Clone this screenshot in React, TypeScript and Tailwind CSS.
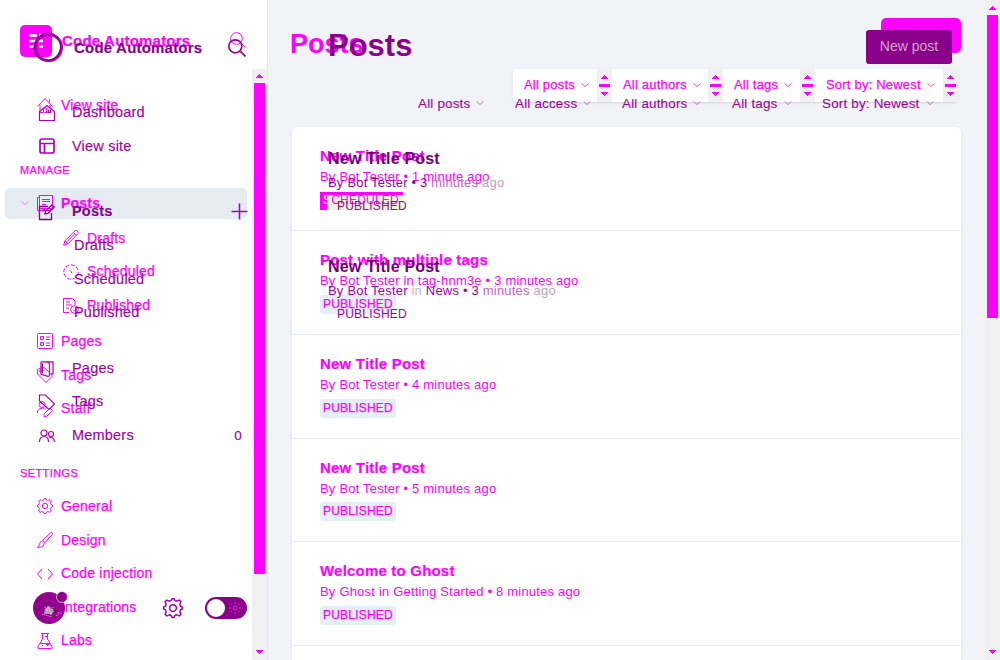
import type { ReactNode } from "react";
import clsx from "clsx";

type IconName =
  | "home" | "house" | "layout" | "posts" | "compose" | "pen" | "clock" | "published" | "pages" | "book"
  | "tag" | "tagSide" | "staff" | "members" | "gear" | "brush" | "code" | "labs" | "search" | "plus" | "down";

const shapes: Record<IconName, ReactNode> = {
  home: <path d="M.5 8.5 8 .5l7.500 8M3 6.500v8h3.500V10h3v4.500H13V6.500M12.500 4.500V1.500" />,
  house: <path d="M.5 6.500 8 .5l7.500 6v9H.5ZM5.500 7.500h2M9.500 5v2.500h2V5" />,
  layout: <><rect x="1" y="1" width="14" height="14" rx="2" /><path d="M1 5.500h14M5.500 5.500V15" /></>,
  posts: <><rect x="2.500" y=".5" width="13" height="13" /><path d="M2.500 2.500h-2v13h13v-2M5 4.500h8M5 6.500h8M5 9.500h4" /></>,
  compose: <path d="M9 2.500H.5v13h12V9M6 10l.7-3L13 .8 15.300 3 9 9.300ZM4 6h2" />,
  pen: <path d="m.7 15.300 1.300-4.600L12 .8q1.300-.8 2.500.4 1.200 1.300.4 2.500L5 13.800ZM2 10.700 5 13.800M10.500 2.500l3 3M3.500 12 12 3.500" />,
  clock: <><circle cx="8" cy="8" r="7.200" strokeDasharray="4 1.600" /><path d="M7 6.500l1.500 1.500v1" /></>,
  published: <><path d="M6 14.500H.5V.5h9L12 3v4M3 4h4M3 7h6M3 10h3" /><circle cx="11.500" cy="11.500" r="3.800" /><path d="m10 11.500 1.500 1.500 2-2.500" /></>,
  pages: <><rect x=".5" y=".5" width="15" height="15" rx="1" /><path d="M3.500 3.500h3v3h-3ZM3.500 9.500h3v3h-3ZM9 4h4M9 6.500h4M9 10h4M9 12.500h4" /></>,
  book: <path d="M2 .8h12v12h-2M2 .8v12.400l7 2.200q1.500 0 1.500-1.400V4Q10.500 1 7 1M3.500 2.500v10" />,
  tag: <><path d="M.5 6V2.500L5 .5l3 .5 7.500 8-6.500 6.500L.5 7Z" /><circle cx="3.500" cy="4" r="1" /></>,
  tagSide: <path d="M.5 1h6l9 9-5.500 5.500L.5 7Z" />,
  staff: <><circle cx="5" cy="3.500" r="3" /><path d="M.5 12V10q1.500-3 5-3 2.500 0 3 1M7 13l6-6 2.500 2.500-6 6H7Z" /></>,
  members: <><circle cx="5" cy="5" r="3" /><circle cx="12" cy="6" r="2.500" /><path d="M.5 14q0-5.500 4.500-5.500T9.500 14M10 10q5-2 5.500 4" /></>,
  gear: <><circle cx="8" cy="8" r="2.700" /><path d="M6.500 2 7.200.5h1.600L9.500 2q1 .8 2 .3l1.500-.6L14.300 3l-.6 1.500q-.5 1 .3 2l1.500.7v1.600l-1.500.7q-.8 1-.3 2l.6 1.500-1.300 1.300-1.500-.6q-1-.5-2 .3l-.7 1.500H7.200L6.500 14q-1-.8-2-.3l-1.500.6L1.700 13l.6-1.500q.5-1-.3-2L.5 8.800V7.200L2 6.500q.8-1 .3-2L1.700 3 3 1.700l1.500.6q1 .5 2-.3Z" /></>,
  brush: <path d="M5.500 8.500 13.500.8q1.200-.7 1.800.3.500.7-.3 1.700l-7.500 8M5.500 8.500l2 2.200M5.500 8.800q-2.500.3-3 3-.2 2.200-2 3.500 7 .4 6.500-4.500" />,
  code: <path d="m5 3-4.500 5L5 13M11 3l4.500 5-4.500 5" />,
  labs: <path d="M4 .5h8M5.500 1v5L.8 14q-.3 1.500 1 1.500h12.400q1.300 0 1-1.500L10.500 6V1M3 10.500h10M8 3.500h2.500M5 12.500h1M9 11.500h3M10.500 10v3" />,
  search: <><circle cx="6.500" cy="6.500" r="5.800" /><path d="m10.800 10.800 4.700 4.700" /></>,
  plus: <path d="M8 .5v15M.5 8h15" />,
  down: <path d="m1 5 7 6 7-6" />,
};

function Icon({ name, className, weight = 1 }: { name: IconName; className?: string; weight?: number }) {
  return (
    <svg viewBox="0 0 16 16" fill="none" stroke="currentColor" strokeWidth={weight} className={clsx("shrink-0 overflow-visible", className)}>
      {shapes[name]}
    </svg>
  );
}

function Arrow({ flip }: { flip?: boolean }) {
  return (
    <svg viewBox="0 0 7 4" className="h-1 w-[7px] shrink-0 fill-[#ff00ff]" shapeRendering="crispEdges">
      {flip ? <path d="M0 0h7v1H0ZM1 1h5v1H1ZM2 2h3v1H2ZM3 3h1v1H3Z" /> : <path d="M3 0h1v1H3ZM2 1h3v1H2ZM1 2h5v1H1ZM0 3h7v1H0Z" />}
    </svg>
  );
}

function Scrollbar({ thumb, className }: { thumb: string; className?: string }) {
  return (
    <div className={clsx("flex w-[15px] shrink-0 flex-col items-center justify-between bg-[#f0f0f0] py-1.5", className)}>
      <div className="flex flex-col items-center gap-[5px]">
        <Arrow />
        <div className={clsx("w-[11px] bg-[#ff00ff]", thumb)} />
      </div>
      <Arrow flip />
    </div>
  );
}

function OldItem({ icon, label, className }: { icon: IconName; label: string; className?: string }) {
  return (
    <div className={clsx("flex h-[33.6px] shrink-0 items-center gap-2", className ?? "pl-[37px]")}>
      <Icon name={icon} className="size-4" />
      {label}
    </div>
  );
}

function OldSidebar() {
  return (
    <aside className="flex w-[268px] shrink-0 flex-col border-r border-[#e3e7ef] bg-white text-[14px] tracking-[.2px] [-webkit-text-stroke:.25px]">
      <header className="flex h-[69px] shrink-0 items-center pb-[13px] pl-5 pt-[27px]">
        <svg viewBox="0 0 32 32" className="-mt-0.5 size-8">
          <rect width="32" height="32" rx="5" fill="#ff00ff" />
          <path d="M9 10.500h8M19 10.500h4M9 16h14M9 21.500h8M19 21.500h4" stroke="white" strokeWidth="2.500" />
        </svg>
        <b className="ml-2.5 text-[15px]">Code Automators</b>
        <Icon name="search" className="-mt-1 ml-[40px] size-4" />
      </header>
      <div className="flex min-h-0 flex-1">
        <nav className="flex min-w-0 flex-1 flex-col pt-[20px]">
          <OldItem icon="home" label="View site" />
          <div className="mb-[5px] mt-9 flex h-6 shrink-0 items-center pl-5 text-[11px] tracking-[.4px]">MANAGE</div>
          <div className="ml-[5px] mr-[5px] flex h-[31px] shrink-0 items-center rounded-[5px] bg-[#e6ebf2] pl-4 font-bold">
            <Icon name="down" className="mr-2 size-2" />
            <Icon name="posts" className="mr-2 size-4" />
            Posts
          </div>
          <div className="mt-[3px] flex flex-col">
            <OldItem icon="pen" label="Drafts" className="pl-[63px]" />
            <OldItem icon="clock" label="Scheduled" className="pl-[63px]" />
            <OldItem icon="published" label="Published" className="pl-[63px]" />
          </div>
          <div className="mt-[2.300px] flex flex-col">
            <OldItem icon="pages" label="Pages" />
            <OldItem icon="tag" label="Tags" />
            <OldItem icon="staff" label="Staff" />
          </div>
          <div className="mb-[4.200px] mt-9 flex h-6 shrink-0 items-center pl-5 text-[11px] tracking-[.4px]">SETTINGS</div>
          <OldItem icon="gear" label="General" />
          <OldItem icon="brush" label="Design" />
          <OldItem icon="code" label="Code injection" />
          <OldItem icon="gear" label="Integrations" />
          <OldItem icon="labs" label="Labs" />
        </nav>
        <Scrollbar thumb="h-[491px]" className="pt-[5px]" />
      </div>
    </aside>
  );
}

const oldFilters = [
  { label: "All posts", width: "w-[84px]" },
  { label: "All authors", width: "w-[96px]" },
  { label: "All tags", width: "w-[77px]" },
  { label: "Sort by: Newest", width: "w-[128px]" },
];

const oldPosts = [
  { title: "New Title Post", meta: "By Bot Tester • 1 minute ago", scheduled: true },
  { title: "Post with multiple tags", meta: "By Bot Tester in tag-hnm3e • 3 minutes ago" },
  { title: "New Title Post", meta: "By Bot Tester • 4 minutes ago" },
  { title: "New Title Post", meta: "By Bot Tester • 5 minutes ago" },
  { title: "Welcome to Ghost", meta: "By Ghost in Getting Started • 8 minutes ago" },
];

function OldContent() {
  return (
    <main className="flex min-w-0 flex-1 flex-col overflow-hidden pl-6 pr-6">
      <div className="flex h-[69px] shrink-0 items-start justify-between pt-[18px]">
        <h1 className="-ml-[2px] mt-2 text-[27px] font-bold leading-9">Posts</h1>
        <div className="h-[35px] w-20 rounded-[5px] bg-[#ff00ff]" />
      </div>
      <div className="mr-[3px] flex h-[33px] shrink-0 self-end rounded bg-white text-[13px] tracking-[.2px] shadow-sm [-webkit-text-stroke:.25px]">
        {oldFilters.map((f) => (
          <div key={f.label} className="flex">
            <div className={clsx("flex items-center gap-1.5 whitespace-nowrap pb-0.5 pl-[11px]", f.width)}>
              {f.label}
              <Icon name="down" className="size-2" weight={1.500} />
            </div>
            <div className="flex w-[15px] flex-col items-center justify-between bg-[#f0f0f0] py-1.5">
              <Arrow />
              <div className="h-[3px] w-[11px] bg-[#ff00ff]" />
              <Arrow flip />
            </div>
          </div>
        ))}
      </div>
      <div className="mt-[25px] min-h-0 flex-1 rounded-t-[5px] bg-white pt-[.5px] shadow">
        {oldPosts.map((p, i) => (
          <article key={i} className="flex h-[103.7px] flex-col items-start border-b border-[#e3ecf4] pl-7 pt-[18.950px] tracking-[.2px]">
            <h3 className="text-[15px] font-bold leading-5 [-webkit-text-stroke:.2px]">{p.title}</h3>
            <p className="mt-px text-[13px] leading-5">{p.meta}</p>
            {p.scheduled ? (
              <div className="mt-[4.600px] flex h-[18px] w-[83px] bg-[#ff00ff] pl-[7px] pt-[3px]">
                <div className="h-[15px] flex-1 bg-[#edf5da]">
                  <div className="-ml-1 -mt-[3px] text-[12px] leading-4"><span className="text-white">S</span>CHEDULED</div>
                </div>
              </div>
            ) : (
              <div className="mt-[3.800px] h-[19px] rounded-[3px] bg-[#e5eef5] px-[3px] text-[12px] leading-[18px] [-webkit-text-stroke:.25px]">PUBLISHED</div>
            )}
          </article>
        ))}
      </div>
    </main>
  );
}

function NewItem({ icon, label, count }: { icon: IconName; label: string; count?: string }) {
  return (
    <div className="flex h-[33.5px] shrink-0 items-center pl-[39px] pr-[26px]">
      <Icon name={icon} className="mr-[17px] size-4 text-[#b000b0]" weight={icon === "layout" ? 1.7 : 1.2} />
      {label}
      {count && <span className="ml-auto text-[13.500px]">{count}</span>}
    </div>
  );
}

function NewSidebar() {
  return (
    <aside className="flex w-[268px] shrink-0 flex-col text-[14.500px] tracking-[.2px] [-webkit-text-stroke:.15px]">
      <header className="flex h-[96.2px] shrink-0 items-start pl-[33px] pt-8">
        <svg viewBox="0 0 32 32" fill="none" className="size-[31px]">
          <circle cx="16" cy="16" r="13.500" stroke="#a600a6" strokeWidth="3" />
          <ellipse cx="15" cy="15.500" rx="13.500" ry="14.500" transform="rotate(35 15 15)" stroke="#6c006c" />
          <ellipse cx="17" cy="16" rx="13" ry="14.500" stroke="#c000c0" />
        </svg>
        <b className="ml-2.5 mt-1.5 text-[15px] leading-5 text-[#8b008b]">Code Automators</b>
        <Icon name="search" weight={1.5} className="ml-[26px] mt-[7px] size-[18px]" />
      </header>
      <nav className="flex flex-1 flex-col">
        <NewItem icon="house" label="Dashboard" />
        <NewItem icon="layout" label="View site" />
        <div className="mt-8 flex h-[33px] shrink-0 items-center pl-[39px] pr-5 font-bold text-[#8b008b]">
          <Icon name="compose" weight={1.300} className="mr-[17px] size-4" />
          Posts
          <Icon name="plus" className="ml-auto size-[17px] text-[#b000b0]" weight={1.500} />
        </div>
        <div className="mt-px flex flex-col pl-[74px]">
          {["Drafts", "Scheduled", "Published"].map((x) => <div key={x} className="flex h-[33.5px] items-center">{x}</div>)}
        </div>
        <div className="mt-[22.300px] flex flex-col">
          <NewItem icon="book" label="Pages" />
          <NewItem icon="tagSide" label="Tags" />
          <NewItem icon="members" label="Members" count="0" />
        </div>
      </nav>
      <footer className="flex h-[70px] shrink-0 items-start pl-[33px] pt-0.5">
        <svg viewBox="0 0 34 32" className="h-8 w-[34px] overflow-visible">
          <defs><clipPath id="face"><circle cx="16" cy="16" r="16" /></clipPath></defs>
          <g clipPath="url(#face)">
            <path d="M0 0h32v32H0Z" fill="#970091" />
            <path d="M4 10q8-8 20-3M3 20Q12 8 25 13M6 27q7-12 18-8" fill="none" stroke="#75106f" strokeWidth="1.500" />
            <path d="m12 17 4-3 5 5-2 3h-8Z" fill="#b59ab1" />
            <path d="m12 15 2 5 1-6 3 9 2-8M9 22l10 3M23 24l3-4 3 2" stroke="#e9cce6" strokeDasharray="1 1" fill="none" />
            <path d="M30 20q-3-1-5 3" stroke="#e000e0" fill="none" />
          </g>
          <circle cx="29" cy="5" r="5.500" fill="#8b008b" stroke="white" strokeWidth=".6" />
        </svg>
        <Icon name="down" className="ml-2.5 mt-[10px] size-2 text-[#777]" weight={1.500} />
        <Icon name="gear" weight={1.200} className="ml-[78px] mt-1.5 size-[20px] text-[#a600a6]" />
        <div className="ml-[22px] mt-[5px] flex h-[22px] w-[42px] items-center rounded-full bg-[#8b008b] pl-0.5">
          <div className="size-[18px] rounded-full bg-white" />
          <svg viewBox="0 0 12 12" className="ml-1 size-3" fill="none" stroke="#dc20dc">
            <circle cx="6" cy="6" r="2" /><path d="M6 0v2M6 10v2M0 6h2M10 6h2M2 2l1 1M9 9l1 1M2 10l1-1M9 3l1-1" />
          </svg>
        </div>
      </footer>
    </aside>
  );
}

const newFilters = [
  { label: "All posts", width: "w-[97px]" },
  { label: "All access", width: "w-[107px]" },
  { label: "All authors", width: "w-[110px]" },
  { label: "All tags", width: "w-[90px]" },
  { label: "Sort by: Newest", width: "w-[112px]" },
];

function NewContent() {
  return (
    <main className="flex min-w-0 flex-1 flex-col">
      <div className="flex h-[94px] shrink-0 items-start justify-between pl-[60px] pr-[31px] pt-[30px]">
        <h1 className="-mt-0.5 text-[31px] font-bold leading-9 text-[#8b008b]">Posts</h1>
        <button className="h-[34px] w-[86px] rounded-[3px] bg-[#8b008b] pb-0.5 text-[14px] text-[#d2a6cf]">New post</button>
      </div>
      <div className="ml-[150px] flex h-5 shrink-0 text-[13.400px] tracking-[.2px] [-webkit-text-stroke:.1px]">
        {newFilters.map((f) => (
          <div key={f.label} className={clsx("flex shrink-0 items-center gap-1.5 whitespace-nowrap", f.width)}>
            {f.label}<Icon name="down" className="-mt-0.5 size-2 text-[#b54bb7]" weight={1.500} />
          </div>
        ))}
      </div>
      <div className="flex flex-col pl-[60px] pt-[34px] tracking-[.2px]">
        {["", "in"].map((tag) => (
          <article key={tag} className="h-[108px]">
            <h3 className="text-[16px] font-bold leading-[22px] text-[#740074]">New Title Post</h3>
            <p className="mt-[3px] text-[13px] leading-5">
              By Bot Tester {tag && <><span className="text-[#c4b4c8]">in</span> News </>}• 3 <span className="text-[#c565c8]">minutes</span> <span className="text-[#bd9fc0]">ago</span>
            </p>
            <div className="mt-[3px] pl-[9px] text-[12px] leading-5">PUBLISHED</div>
          </article>
        ))}
      </div>
    </main>
  );
}

export default function App() {
  return (
    <div className="relative h-[660px] w-[1000px] overflow-hidden bg-[#f2f3f8] font-['Liberation_Sans',Arial,sans-serif]">
      <div className="flex h-full text-[#ff00ff]">
        <OldSidebar />
        <OldContent />
        <Scrollbar thumb="h-[303px]" />
      </div>
      {/* The newer revision is laid over the older one. */}
      <div className="absolute inset-0 flex pr-[17px] text-[#a000a0]">
        <NewSidebar />
        <NewContent />
      </div>
    </div>
  );
}
